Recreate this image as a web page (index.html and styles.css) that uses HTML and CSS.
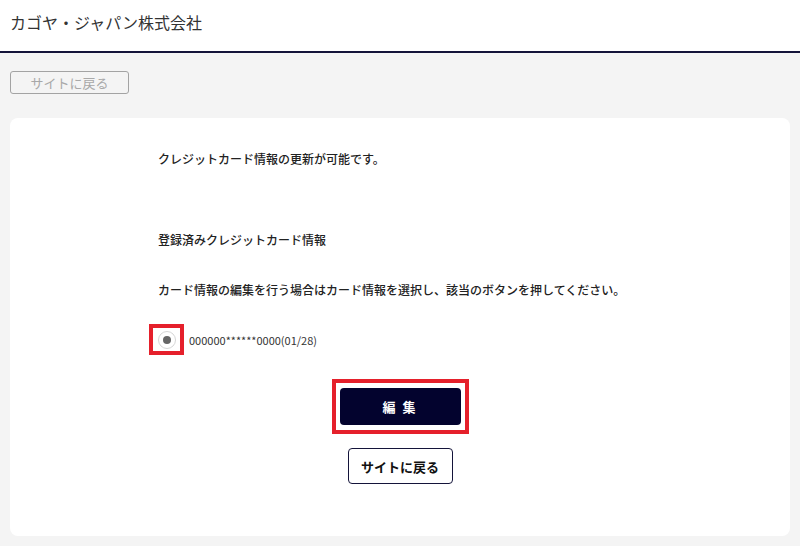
FILE: index.html
```html
<!DOCTYPE html>
<html lang="ja">
<head>
  <meta charset="UTF-8" />
  <meta name="viewport" content="width=device-width, initial-scale=1.0"/>
  <title>クレジットカード情報の更新</title>
  <link rel="stylesheet" href="styles.css">
</head>
<body>

  <!-- ヘッダー -->
  <header class="site-header">
    <h1 class="company">カゴヤ・ジャパン株式会社</h1>
  </header>

  <main class="page">
    <div class="top-nav">
      <button class="btn-ghost" type="button">サイトに戻る</button>
    </div>

    <div class="card">
      <div class="content">
        <p class="lead">クレジットカード情報の更新が可能です。</p>

        <p class="section-title">登録済みクレジットカード情報</p>

        <p class="note">カード情報の編集を行う場合はカード情報を選択し、該当のボタンを押してください。</p>

        <label class="card-row">
          <span class="mark mark-radio">
            <input type="radio" name="card" checked>
            <span class="radio"></span>
          </span>
          <span class="card-number">000000******0000(01/28)</span>
        </label>

        <div class="actions">
          <span class="mark mark-btn">
            <button class="btn-primary" type="button">編 集</button>
          </span>
          <button class="btn-outline" type="button">サイトに戻る</button>
        </div>
      </div>
    </div>
  </main>

</body>
</html>
```

FILE: styles.css
```css
body {
  margin: 0;
  background-color: #f4f4f4;
  color: #222;
  font-family: "Noto Sans CJK JP", "Noto Sans", sans-serif;
}

.site-header {
  background-color: #fff;
  height: 51px;
  border-bottom: 2px solid #14143a;
  display: flex;
  align-items: center;
  padding-left: 10px;
}

.company {
  margin: 0 0 8px;
  font-size: 16px;
  font-weight: normal;
  color: #333;
}

.page {
  padding: 18px 10px 10px;
}

.top-nav {
  display: flex;
  margin-bottom: 24px;
}

.btn-ghost {
  width: 119px;
  height: 23px;
  background-color: #f4f4f4;
  border: 1.5px solid #a3a3a3;
  border-radius: 3px;
  color: #a8a8a8;
  font-family: inherit;
  font-size: 13px;
  padding: 0;
  line-height: 1;
}

.card {
  background-color: #fff;
  border-radius: 8px;
  padding: 32px 0 52px;
}

.content {
  width: 484px;
  margin: 0 auto;
}

.content p {
  margin: 0;
  font-size: 12px;
  line-height: 18px;
  font-weight: 500;
}

.section-title {
  margin-top: 63px !important;
}

.note {
  margin-top: 32px !important;
}

.card-row {
  display: flex;
  align-items: center;
  margin-top: 25px;
  margin-left: -9px;
}

.mark {
  border: 4px solid #e5202b;
  display: inline-flex;
  align-items: center;
  justify-content: center;
}

.mark-radio {
  width: 27px;
  height: 23px;
  position: relative;
}

.mark-radio input {
  position: absolute;
  opacity: 0;
  margin: 0;
}

.radio {
  width: 16px;
  height: 16px;
  border: 1px solid #d6d6d6;
  border-radius: 50%;
  display: flex;
  align-items: center;
  justify-content: center;
  margin-left: 1px;
}

.radio::after {
  content: "";
  width: 8px;
  height: 8px;
  border-radius: 50%;
  background-color: #666;
}

.card-number {
  margin-left: 5px;
  font-size: 11px;
  color: #333;
}

.actions {
  display: flex;
  flex-direction: column;
  align-items: center;
  margin-top: 24px;
}

.mark-btn {
  padding: 5px 4px;
}

.btn-primary {
  width: 121px;
  height: 37px;
  background-color: #03032e;
  color: #fff;
  border: none;
  border-radius: 4px;
  font-family: inherit;
  font-size: 13px;
  font-weight: bold;
  letter-spacing: 2px;
  cursor: pointer;
}

.btn-outline {
  margin-top: 14px;
  width: 105px;
  height: 36px;
  background-color: #fff;
  color: #111;
  border: 1.5px solid #14143a;
  border-radius: 4px;
  font-family: inherit;
  font-size: 13px;
  font-weight: bold;
  cursor: pointer;
}
```
